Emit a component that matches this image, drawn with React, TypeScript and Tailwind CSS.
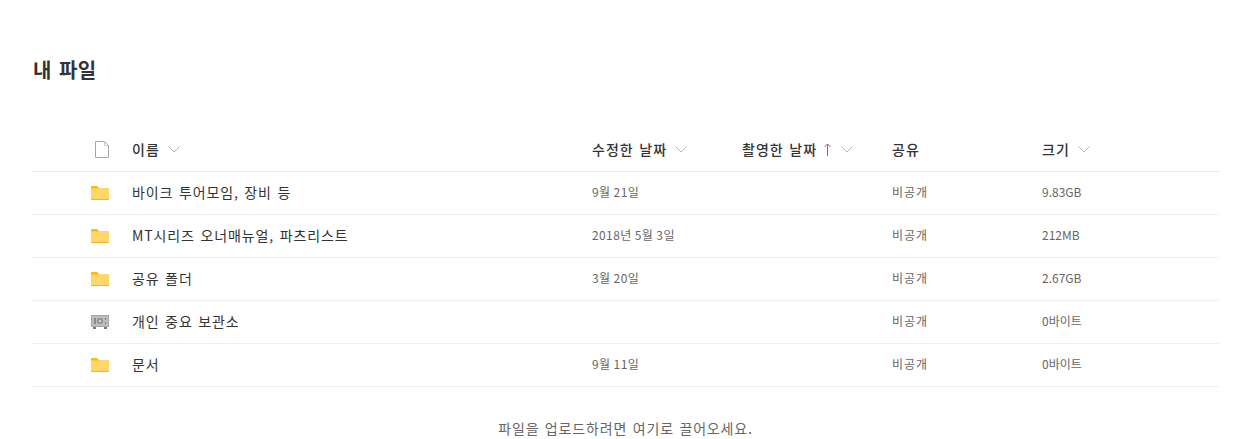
const rows = [
  { name: "바이크 투어모임, 장비 등", modified: "9월 21일", sharing: "비공개", size: "9.83GB", kind: "folder" },
  { name: "MT시리즈 오너매뉴얼, 파츠리스트", modified: "2018년 5월 3일", sharing: "비공개", size: "212MB", kind: "folder" },
  { name: "공유 폴더", modified: "3월 20일", sharing: "비공개", size: "2.67GB", kind: "folder" },
  { name: "개인 중요 보관소", modified: "", sharing: "비공개", size: "0바이트", kind: "vault" },
  { name: "문서", modified: "9월 11일", sharing: "비공개", size: "0바이트", kind: "folder" },
];

function Chevron() {
  return (
    <svg width="12" height="7" viewBox="0 0 12 7" fill="none" className="ml-[8px]">
      <path d="M.5.500l5.500 5.500 5.500-5.500" stroke="#b8b8b8" strokeWidth="1" />
    </svg>
  );
}

function SortArrow() {
  return (
    <svg width="7" height="13" viewBox="0 0 7 13" fill="none" className="ml-[7px] mr-[2px]">
      <path d="M3.500 13V1M.5 4l3-3 3 3" stroke="#a4646c" strokeWidth="1" />
    </svg>
  );
}

function FileIcon() {
  return (
    <svg width="14" height="17" viewBox="0 0 14 17" fill="none">
      <path d="M.5.5h9l4 4v12H.5z" fill="#fff" stroke="#a6a6a6" />
      <path d="M9.5.5v4h4" stroke="#c8c8c8" fill="none" />
    </svg>
  );
}

function FolderIcon() {
  return (
    <svg width="18" height="14" viewBox="0 0 18 14">
      <path d="M0 1a1 1 0 011-1h5l2 2h10v12H0z" fill="#ffd768" />
      <path d="M0 1a1 1 0 011-1h5l2 2.500H0z" fill="#ffb900" />
      <rect x="0" y="13" width="18" height="1" fill="#f2b13c" />
    </svg>
  );
}

function VaultIcon() {
  return (
    <svg width="18" height="14" viewBox="0 0 18 14">
      <rect x="0" y="0" width="18" height="12" fill="#a8a8a8" />
      <rect x="1" y="1" width="16" height="10" fill="#bdbdbd" />
      <circle cx="9" cy="6" r="3" fill="#8a8a8a" />
      <circle cx="9" cy="6" r="1.500" fill="#d0d0d0" />
      <rect x="3" y="3" width="2" height="6" fill="#8a8a8a" />
      <rect x="14" y="3" width="1" height="2" fill="#7a7a7a" />
      <rect x="14" y="7" width="1" height="2" fill="#7a7a7a" />
      <rect x="2" y="12" width="3" height="2" fill="#7a7a7a" />
      <rect x="13" y="12" width="3" height="2" fill="#7a7a7a" />
    </svg>
  );
}

export default function App() {
  return (
    <div className="h-[439px] overflow-hidden bg-white font-['Noto_Sans_CJK_KR','Noto_Sans',sans-serif] text-[#333]">
      <h1 className="pl-[33px] pt-[56px] text-[20px] leading-[28px] font-bold tracking-[0.5px] [word-spacing:2px]">
        내 파일
      </h1>

      <div className="mx-[32px] mt-[45px]">
        {/* Header row */}
        <div className="grid h-[43px] grid-cols-[100px_460px_150px_150px_150px_1fr] items-center border-b border-[#eaeaea] pb-[2px] text-[14px] font-medium tracking-[1px] [word-spacing:1.5px]">
          <div className="flex justify-center pl-[40px]">
            <FileIcon />
          </div>
          <div className="flex items-center">
            이름
            <Chevron />
          </div>
          <div className="flex items-center">
            수정한 날짜
            <Chevron />
          </div>
          <div className="flex items-center">
            촬영한 날짜
            <SortArrow />
            <Chevron />
          </div>
          <div>공유</div>
          <div className="flex items-center">
            크기
            <Chevron />
          </div>
        </div>

        {/* File rows */}
        {rows.map((row) => (
          <div
            key={row.name}
            className="grid h-[43px] grid-cols-[100px_460px_150px_150px_150px_1fr] items-center border-b border-[#f0f0f0] text-[12px] text-[#666]"
          >
            <div className="flex justify-center pl-[36px]">
              {row.kind === "vault" ? <VaultIcon /> : <FolderIcon />}
            </div>
            <div className="pb-[2px] text-[14px] tracking-[0.9px] text-[#333] [word-spacing:1.5px]">{row.name}</div>
            <div className="pb-[3px] tracking-[0.4px]">{row.modified}</div>
            <div />
            <div className="pb-[3px] tracking-[1px]">{row.sharing}</div>
            <div className="pb-[3px]">{row.size}</div>
          </div>
        ))}
      </div>

      <p className="mt-[31px] text-center text-[14px] leading-[20px] tracking-[0.85px] text-[#666] [word-spacing:1.5px]">
        파일을 업로드하려면 여기로 끌어오세요.
      </p>
    </div>
  );
}
